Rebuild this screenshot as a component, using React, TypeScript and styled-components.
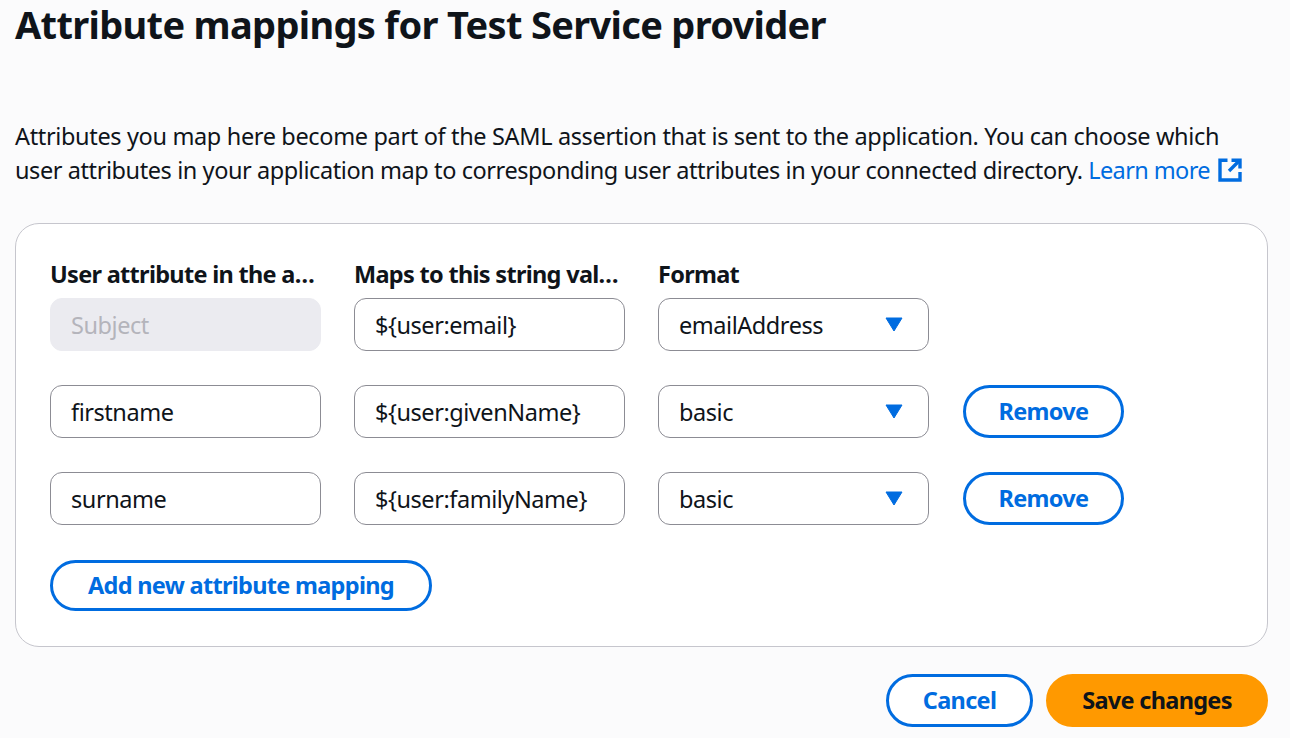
import styled, { createGlobalStyle } from "styled-components";

const GlobalStyle = createGlobalStyle`
  html, body {
    margin: 0;
    padding: 0;
    background: #fbfbfc;
    overflow: hidden;
  }
  body {
    font-family: "Noto Sans", "Open Sans", sans-serif;
    color: #0f141a;
  }
`;

const Page = styled.div`
  width: 1290px;
  height: 738px;
  box-sizing: border-box;
  padding: 0 22px 0 15px;
  display: flex;
  flex-direction: column;
`;

const Heading = styled.h1`
  margin: 0;
  height: 52px;
  line-height: 48px;
  font-size: 38px;
  font-weight: 700;
  letter-spacing: -0.68px;
  white-space: nowrap;
`;

const Intro = styled.p`
  margin: 68px 0 0;
  font-size: 23.5px;
  line-height: 33.5px;
  white-space: nowrap;
`;

const IntroLine = styled.span<{ $tracking: number }>`
  display: block;
  letter-spacing: ${(p) => p.$tracking}px;
`;

const Link = styled.a`
  color: #006ce0;
  text-decoration: none;
  display: inline-flex;
  align-items: center;
  gap: 8px;
  letter-spacing: -0.6px;
  vertical-align: top;
  height: 33.5px;
`;

const Card = styled.section`
  margin-top: 36px;
  height: 424px;
  box-sizing: border-box;
  padding: 35px 34px;
  background: #ffffff;
  border: 1px solid #c6c6cd;
  border-radius: 24px;
  display: flex;
  flex-direction: column;
  align-items: flex-start;
`;

const Row = styled.div`
  display: grid;
  grid-template-columns: 271px 271px 271px auto;
  column-gap: 33px;
  margin-bottom: 34px;
`;

const HeaderRow = styled(Row)`
  margin-bottom: 0;
  box-sizing: border-box;
  height: 39px;
  padding-bottom: 9px;
  align-items: center;
`;

const ColumnLabel = styled.div`
  font-size: 23.5px;
  font-weight: 700;
  letter-spacing: -0.7px;
  overflow: hidden;
  text-overflow: ellipsis;
  white-space: nowrap;
`;

const Field = styled.div<{ $disabled?: boolean }>`
  box-sizing: border-box;
  height: 53px;
  padding: 0 20px;
  display: flex;
  align-items: center;
  justify-content: space-between;
  font-size: 23.5px;
  letter-spacing: -0.45px;
  white-space: nowrap;
  border-radius: 12px;
  border: 1px solid ${(p) => (p.$disabled ? "#ebebf0" : "#8c8c94")};
  background: ${(p) => (p.$disabled ? "#ebebf0" : "#ffffff")};
  color: ${(p) => (p.$disabled ? "#b4b4bb" : "#0f141a")};
`;

const Button = styled.button<{ $width: number; $primary?: boolean }>`
  box-sizing: border-box;
  width: ${(p) => p.$width}px;
  height: 53px;
  padding: 0 0 2px;
  font-family: inherit;
  font-size: 23.5px;
  font-weight: 700;
  letter-spacing: -0.7px;
  white-space: nowrap;
  border-radius: 27px;
  border: 3px solid ${(p) => (p.$primary ? "#ff9900" : "#006ce0")};
  background: ${(p) => (p.$primary ? "#ff9900" : "#ffffff")};
  color: ${(p) => (p.$primary ? "#0f141a" : "#006ce0")};
`;

const RemoveButton = styled(Button)`
  margin-left: 1px;
`;

const AddButton = styled(Button)`
  margin-top: 1px;
`;

const CaretWrap = styled.span`
  display: flex;
  margin-right: 5px;
`;

const Footer = styled.div`
  margin-top: 27px;
  display: flex;
  justify-content: flex-end;
  gap: 13px;
`;

const Caret = () => (
  <CaretWrap>
    <svg width="18" height="15" viewBox="0 0 18 15" aria-hidden="true">
      <path d="M1 1h16L9 14z" fill="#006ce0" stroke="#006ce0" strokeWidth="1" strokeLinejoin="round" />
    </svg>
  </CaretWrap>
);

const ExternalIcon = () => (
  <svg width="24" height="24" viewBox="0 0 24 24" fill="none" stroke="#006ce0" strokeWidth="3.4" aria-hidden="true">
    <path d="M9.5 2.2H2v19.8h20v-8" />
    <path d="M13.5 2.2H22v8.3" />
    <path d="M21.5 2.5 11 13" />
  </svg>
);

const mappings = [
  { attr: "Subject", value: "${user:email}", format: "emailAddress", fixed: true },
  { attr: "firstname", value: "${user:givenName}", format: "basic" },
  { attr: "surname", value: "${user:familyName}", format: "basic" },
];

export default function App() {
  return (
    <Page>
      <GlobalStyle />
      <Heading>Attribute mappings for Test Service provider</Heading>
      <Intro>
        <IntroLine $tracking={-0.35}>
          Attributes you map here become part of the SAML assertion that is sent to the application. You can choose
          which
        </IntroLine>
        <IntroLine $tracking={-0.42}>
          user attributes in your application map to corresponding user attributes in your connected directory.{" "}
          <Link href="#">
            Learn more <ExternalIcon />
          </Link>
        </IntroLine>
      </Intro>
      <Card>
        <HeaderRow>
          <ColumnLabel>User attribute in the application</ColumnLabel>
          <ColumnLabel>Maps to this string value or user attribute</ColumnLabel>
          <ColumnLabel>Format</ColumnLabel>
        </HeaderRow>
        {mappings.map((m) => (
          <Row key={m.attr}>
            <Field $disabled={m.fixed}>{m.attr}</Field>
            <Field>{m.value}</Field>
            <Field>
              {m.format}
              <Caret />
            </Field>
            {!m.fixed && <RemoveButton $width={161}>Remove</RemoveButton>}
          </Row>
        ))}
        <AddButton $width={382}>Add new attribute mapping</AddButton>
      </Card>
      <Footer>
        <Button $width={147}>Cancel</Button>
        <Button $width={222} $primary>
          Save changes
        </Button>
      </Footer>
    </Page>
  );
}
